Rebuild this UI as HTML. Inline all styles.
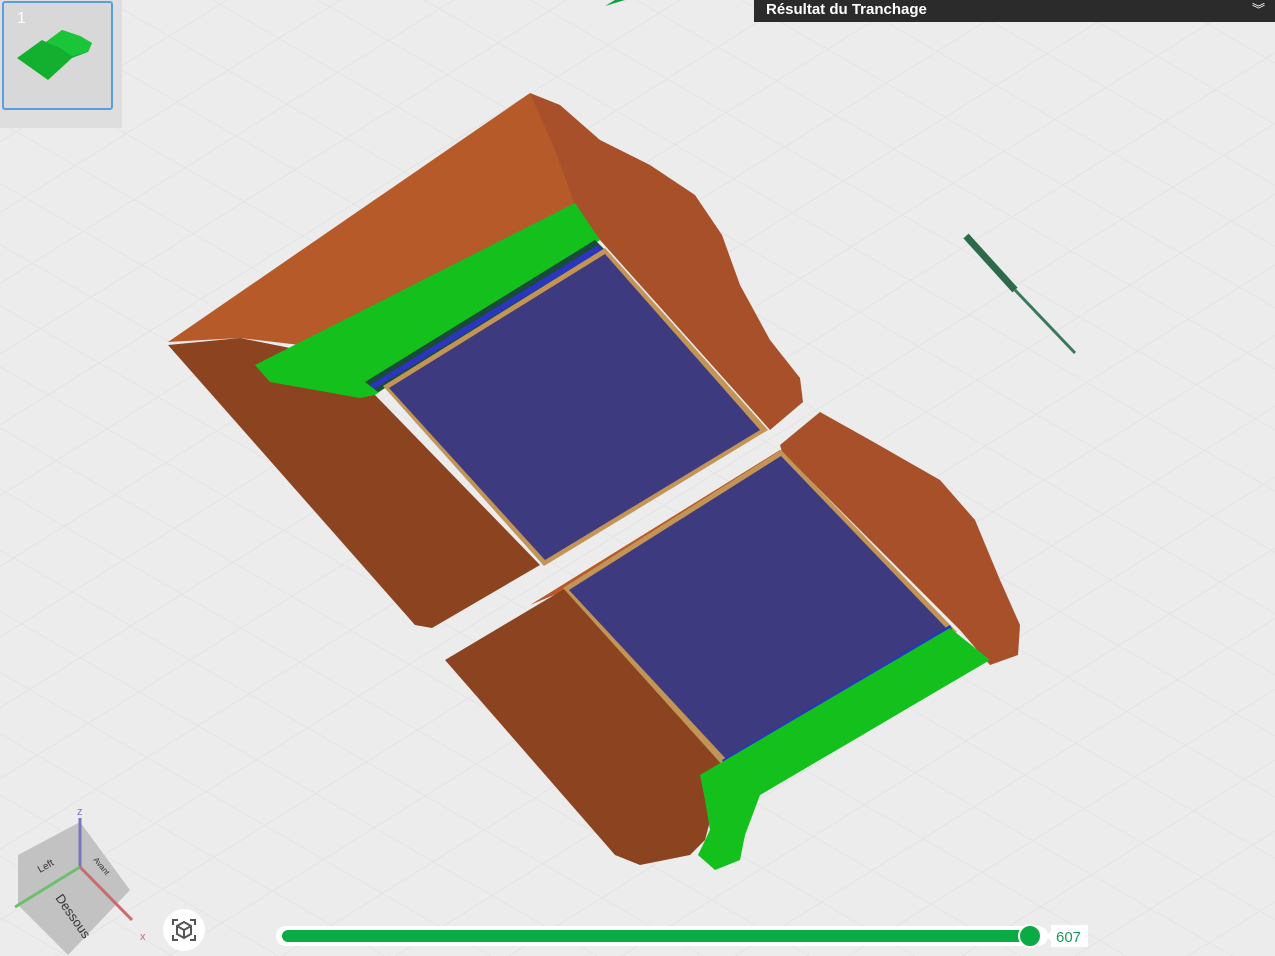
<!DOCTYPE html>
<html><head><meta charset="utf-8"><style>
html,body{margin:0;padding:0;width:1275px;height:956px;overflow:hidden;background:#e9e9e9;font-family:"Liberation Sans",sans-serif}
svg{position:absolute;left:0;top:0}
</style></head><body>
<svg width="1275" height="956" viewBox="0 0 1275 956">
<defs>
<pattern id="g" width="60" height="60" patternUnits="userSpaceOnUse" patternTransform="rotate(-32) skewX(28)">
<path d="M0 0H60M0 0V60" stroke="#dcdcdc" stroke-width="1" fill="none"/>
</pattern>
</defs>
<rect width="1275" height="956" fill="#ececec"/>
<rect width="1275" height="956" fill="url(#g)"/>
<!-- upper part -->
<polygon points="168,342 530,93 560,140 575,205 380,340 300,345 240,338" fill="#b75a2a"/>
<polygon points="168,345 240,338 300,350 375,395 540,565 432,628 415,625" fill="#8c4420"/>
<polygon points="530,93 560,105 600,140 650,165 695,195 722,235 740,285 770,340 800,378 803,402 770,430 600,240 575,205 555,150" fill="#a8502a"/>
<polygon points="255,365 575,203 600,240 375,395 360,398 270,382" fill="#14c01c"/>
<polygon points="365,382 595,240 605,250 378,392" fill="#1a4a3a"/>
<polygon points="370,385 598,245 602,250 374,389" fill="#2a35c0"/>
<polygon points="383,386 605,248 768,430 544,566" fill="#c29456"/>
<polygon points="389,388 605,254 760,430 545,560" fill="#3d3a7f"/>
<!-- lower part -->
<polygon points="780,445 820,412 870,440 940,480 975,520 1000,580 1020,625 1018,655 990,665 960,630 782,452" fill="#a8502a"/>
<polygon points="530,605 780,450 786,456 566,590" fill="#b75a2a"/>
<polygon points="445,660 566,588 725,765 705,840 690,855 640,865 615,855" fill="#8c4420"/>
<polygon points="563,588 781,450 957,632 724,767" fill="#c29456"/>
<polygon points="569,590 781,456 950,632 727,760" fill="#3d3a7f"/>
<polygon points="722,760 950,625 955,635 726,768" fill="#2a35c0"/>
<polygon points="700,775 950,628 990,660 760,795 745,835 740,860 715,870 698,855 710,830 705,800" fill="#14c01c"/>
<!-- tool -->
<line x1="966" y1="236" x2="1015" y2="290" stroke="#2d6a4a" stroke-width="7"/>
<line x1="1015" y1="290" x2="1075" y2="353" stroke="#3a7a5a" stroke-width="3"/>
<polygon points="605,6 625,0 615,0" fill="#14a040"/>
<!-- cube -->
<polygon points="18,855 80,822 130,890 68,955 18,905" fill="#c2c2c2"/>
<line x1="80" y1="867" x2="80" y2="818" stroke="#7777bb" stroke-width="3"/>
<line x1="80" y1="867" x2="15" y2="907" stroke="#6cbf6c" stroke-width="3"/>
<line x1="80" y1="867" x2="132" y2="920" stroke="#c86c6c" stroke-width="3"/>
<text x="77" y="815" font-size="11" fill="#7777bb">z</text>
<text x="140" y="940" font-size="11" fill="#c86c6c">x</text>
<text x="40" y="873" font-size="10" fill="#333" transform="rotate(-30 40 873)">Left</text>
<text x="93" y="860" font-size="8" fill="#333" transform="rotate(50 93 860)">Avant</text>
<text x="55" y="898" font-size="13" fill="#333" transform="rotate(55 55 898)">Dessous</text>
<circle cx="184" cy="930" r="21" fill="#fff"/>
<g fill="none" stroke="#555" stroke-width="2">
<path d="M173 925v-5h5M190 920h5v5M195 935v5h-5M178 940h-5v-5"/>
<path d="M184 922l7 4v8l-7 4l-7-4v-8zM177 926l7 4l7-4M184 930v8"/>
</g>
<!-- slider -->
<rect x="276" y="926" width="772" height="20" rx="10" fill="#fff"/>
<rect x="282" y="930" width="750" height="12" rx="6" fill="#0aaa45"/>
<circle cx="1030" cy="936" r="11" fill="#0aaa45" stroke="#fff" stroke-width="2"/>
<polygon points="1046,936 1052,930 1052,942" fill="#fff"/>
<rect x="1051" y="925" width="37" height="22" fill="#fff"/>
<text x="1056" y="942" font-size="15" fill="#1a9a5a">607</text>
</svg>
<div style="position:absolute;left:0;top:0;width:122px;height:128px;background:#dedede"></div>
<div style="position:absolute;left:2px;top:1px;width:107px;height:105px;border:2px solid #5b9ee0;border-radius:3px;background:#d8d8d8"></div>
<div style="position:absolute;left:17px;top:10px;color:#fff;font-size:16px">1</div>
<svg width="122" height="128" style="position:absolute;left:0;top:0">
<polygon points="17,58 42,40 46,42 62,30 80,36 92,43 88,52 72,58 48,80" fill="#13b030"/>
<polygon points="46,42 62,30 80,36 92,43 88,52 72,56 60,48" fill="#1ac53a"/>
</svg>
<div style="position:absolute;left:754px;top:0;width:521px;height:22px;background:#2b2b2b;color:#fff;font-weight:bold;font-size:15px;line-height:19px;padding-left:12px;box-sizing:border-box">Résultat du Tranchage<span style="position:absolute;right:10px;top:0;font-weight:normal;font-size:13px">︾</span></div>
</body></html>
